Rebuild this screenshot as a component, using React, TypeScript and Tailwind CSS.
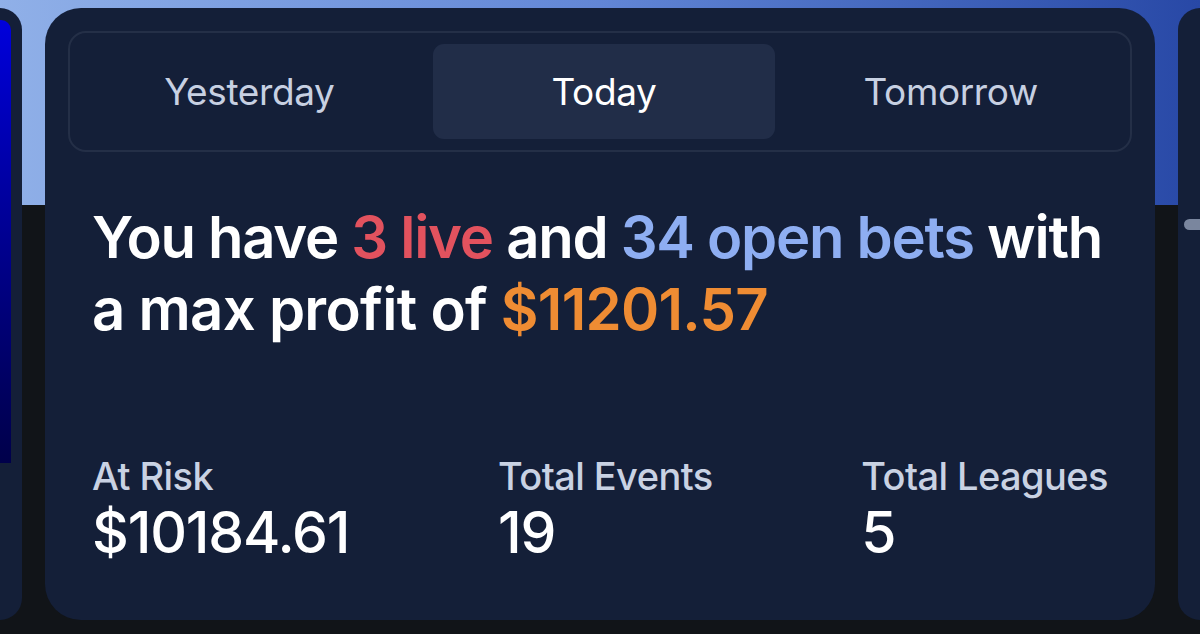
import React from "react";

const tabs = ["Yesterday", "Today", "Tomorrow"];

const stats = [
  { label: "At Risk", value: "$10184.61" },
  { label: "Total Events", value: "19" },
  { label: "Total Leagues", value: "5" },
];

export default function App() {
  return (
    <div
      className="w-[1200px] h-[634px] overflow-hidden grid bg-[#111418]"
      style={{ fontFamily: "Inter, 'Noto Sans', sans-serif" }}
    >
      {/* backdrop */}
      <div className="col-start-1 row-start-1 flex flex-col">
        <div className="h-[205px] bg-gradient-to-r from-[#90b0e8] via-[#6286d6] to-[#2848a6]" />
        <div className="flex-1 bg-[#111418]" />
      </div>

      {/* cards */}
      <div className="col-start-1 row-start-1 flex pt-[8px] pb-[14px] gap-[23px]">
        <div className="w-[22px] shrink-0 bg-[#141f38] rounded-r-[22px] pt-[12px]">
          <div className="w-[11px] h-[443px] rounded-tr-[10px] bg-gradient-to-b from-[#0000dc] to-[#00004a]" />
        </div>

        <div className="w-[1110px] shrink-0 bg-[#141f38] rounded-[36px] p-[23px] flex flex-col">
          <div className="border-2 border-[#242f47] rounded-[18px] pl-[16px] pr-[8px] py-[11px] grid grid-cols-3 gap-[4px]">
            {tabs.map((t) => (
              <div
                key={t}
                className={
                  t === "Today"
                    ? "h-[95px] rounded-[11px] bg-[#212d48] flex items-center justify-center text-[37px] text-white"
                    : t === "Yesterday"
                    ? "h-[95px] rounded-[11px] flex items-center justify-center pr-[16px] text-[37px] text-[#c7d0e2]"
                    : "h-[95px] rounded-[11px] flex items-center justify-center text-[37px] text-[#c7d0e2]"
                }
              >
                <span className="tracking-[-0.01em]">{t}</span>
              </div>
            ))}
          </div>

          <div className="px-[24px] mt-[49px]">
            <p className="text-[58px] leading-[72px] font-semibold text-white tracking-[-0.022em]">
              <span className="block whitespace-nowrap">
                You have <span className="text-[#e2525e]">3 live</span> and{" "}
                <span className="text-[#8eaef2]">34 open bets</span> with
              </span>
              <span className="block whitespace-nowrap tracking-[-0.012em]">
                a max profit of <span className="text-[#ef8c33]">$11201.57</span>
              </span>
            </p>

            <div className="flex justify-between mt-[109px]">
              {stats.map((s) => (
                <div key={s.label} className="flex flex-col">
                  <span className="text-[38px] leading-[44px] font-medium text-[#c9d2e3] tracking-[-0.015em]">
                    {s.label}
                  </span>
                  <span className="text-[57px] leading-[70px] font-medium text-white tracking-[-0.02em]">
                    {s.value}
                  </span>
                </div>
              ))}
            </div>
          </div>
        </div>

        <div className="flex-1 bg-[#141f38] rounded-tl-[30px] rounded-bl-[30px] pt-[211px] pl-[6px]">
          <div className="h-[11px] rounded-l-full bg-[#7a869e]" />
        </div>
      </div>
    </div>
  );
}
